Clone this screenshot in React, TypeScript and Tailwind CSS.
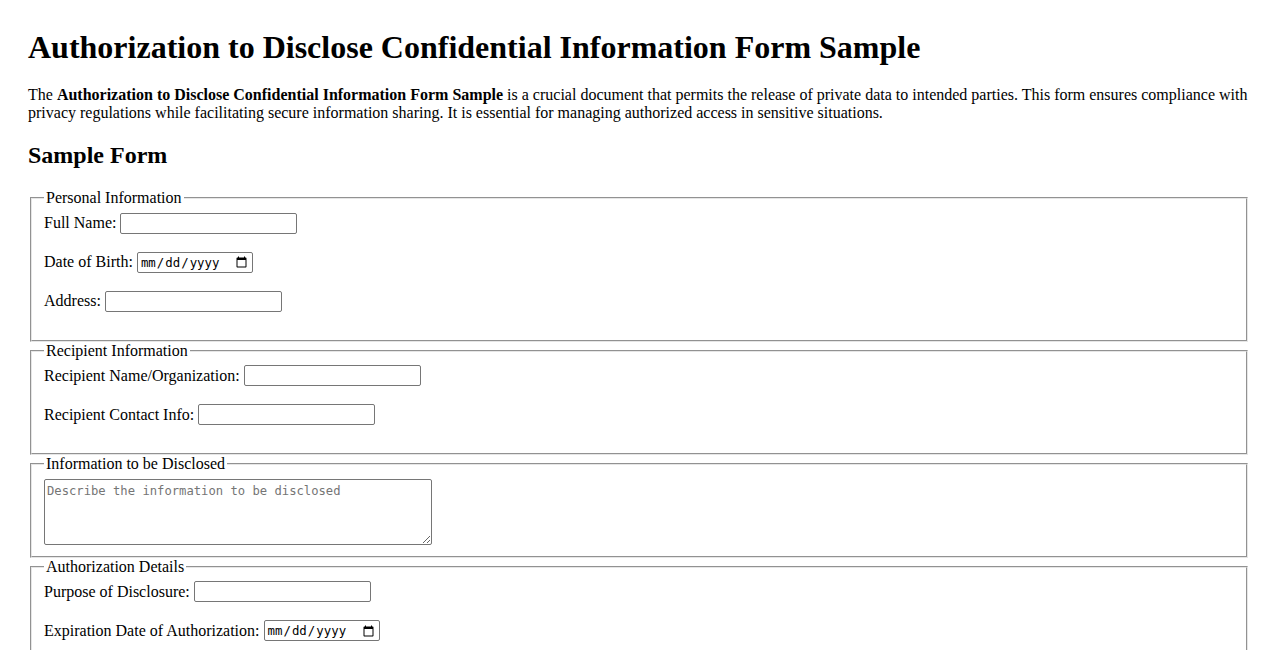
import React from "react";

const serif = { fontFamily: '"Liberation Serif", "Times New Roman", serif' };

function TextRow({ label }: { label: string }) {
  return (
    <div className="mb-4 flex h-[23px] items-center gap-[4px]">
      <label className="text-[16px] leading-[18px] text-black">{label}</label>
      <input
        type="text"
        className="h-[21px] w-[177px] rounded-[2px] border border-[#767676] bg-white px-[2px] py-[1px] text-[13.33px] outline-none"
      />
    </div>
  );
}

function DateRow({ label }: { label: string }) {
  return (
    <div className="mb-4 flex h-[23px] items-center gap-[4px]">
      <label className="text-[16px] leading-[18px] text-black">{label}</label>
      <input
        type="date"
        className="h-[21px] w-[116px] rounded-[2px] border border-[#767676] bg-white px-[2px] py-[1px] text-[12.4px] leading-[15px] text-black outline-none [font-family:'DejaVu_Sans_Mono','Liberation_Mono',monospace]"
      />
    </div>
  );
}

function Fieldset({ legend, children }: { legend: string; children: React.ReactNode }) {
  return (
    <fieldset className="mx-[2px] border-2 border-[#e6e6e6] [border-style:groove] px-3 pt-[4.6px] pb-[11px]">
      <legend className="px-[2px] text-[16px] leading-[18px] text-black">{legend}</legend>
      {children}
    </fieldset>
  );
}

export default function App() {
  return (
    <div className="min-h-screen bg-white px-[28px] pb-10 text-black" style={serif}>
      <h1 className="mt-[29px] mb-[21px] text-[32px] font-bold leading-[36px]">
        Authorization to Disclose Confidential Information Form Sample
      </h1>
      <p className="text-[16px] leading-[18px]">
        The <strong className="font-bold">Authorization to Disclose Confidential Information Form Sample</strong> is a crucial
        document that permits the release of private data to intended parties. This form ensures compliance with privacy
        regulations while facilitating secure information sharing. It is essential for managing authorized access in
        sensitive situations.
      </p>
      <h2 className="mt-[20px] mb-[20px] text-[24px] font-bold leading-[27px]">Sample Form</h2>
      <form>
        <Fieldset legend="Personal Information">
          <TextRow label="Full Name:" />
          <DateRow label="Date of Birth:" />
          <TextRow label="Address:" />
        </Fieldset>
        <Fieldset legend="Recipient Information">
          <TextRow label="Recipient Name/Organization:" />
          <TextRow label="Recipient Contact Info:" />
        </Fieldset>
        <Fieldset legend="Information to be Disclosed">
          <textarea
            placeholder="Describe the information to be disclosed"
            className="mt-[1px] block h-[66px] w-[388px] rounded-[2px] border border-[#767676] bg-white px-[2px] pt-[4px] pb-[2px] text-[12.2px] leading-[15px] outline-none placeholder:text-[#757575] [font-family:'DejaVu_Sans_Mono','Liberation_Mono',monospace]"
          />
        </Fieldset>
        <Fieldset legend="Authorization Details">
          <TextRow label="Purpose of Disclosure:" />
          <DateRow label="Expiration Date of Authorization:" />
        </Fieldset>
      </form>
    </div>
  );
}
